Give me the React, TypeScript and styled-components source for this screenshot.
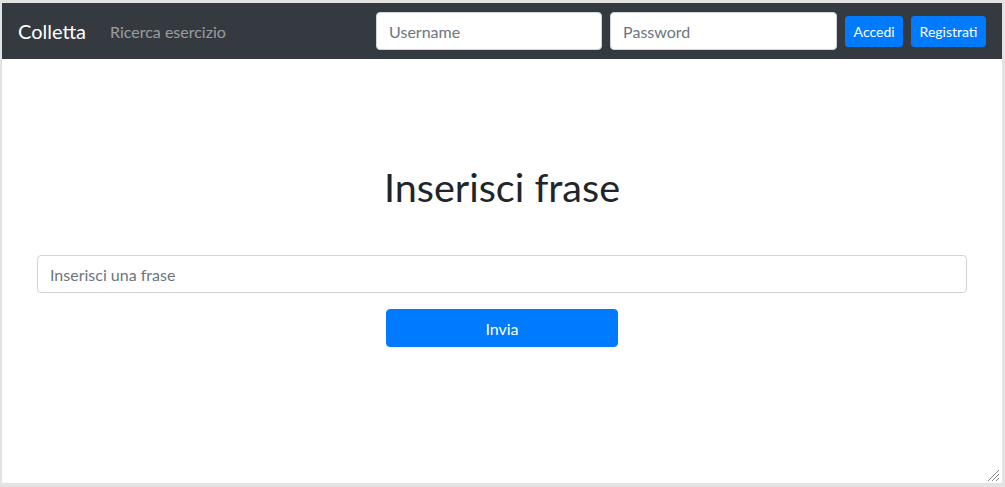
import React from "react";
import styled, { createGlobalStyle } from "styled-components";

const Global = createGlobalStyle`
  html, body { margin: 0; padding: 0; background: #e3e3e3; }
  body { font-family: "Lato", "Liberation Sans", sans-serif; }
  * { box-sizing: border-box; }
`;

const Frame = styled.div`
  width: 1005px;
  height: 487px;
  padding: 3px 3px 4px 2px;
  background: #e3e3e3;
`;

const Page = styled.div`
  position: relative;
  height: 100%;
  background: #ffffff;
  display: flex;
  flex-direction: column;
`;

const Navbar = styled.nav`
  height: 56px;
  background: #343a40;
  display: flex;
  align-items: center;
  padding: 0 16px;
`;

const Brand = styled.a`
  color: #ffffff;
  font-size: 20px;
  margin-right: 24px;
  text-decoration: none;
`;

const NavLink = styled.a`
  color: rgba(255, 255, 255, 0.5);
  font-size: 16px;
  text-decoration: none;
`;

const NavForm = styled.form`
  margin-left: auto;
  display: flex;
  align-items: center;
  gap: 8px;
`;

const Input = styled.input<{ $w?: string }>`
  width: ${(p) => p.$w || "100%"};
  height: 38px;
  padding: 6px 12px;
  font-family: inherit;
  font-size: 16px;
  color: #495057;
  background: #fff;
  border: 1px solid #ced4da;
  border-radius: 4px;
  outline: none;
  &::placeholder { color: #6c757d; }
`;

const SmallButton = styled.button`
  height: 31px;
  padding: 0 7.5px;
  font-family: inherit;
  font-size: 14px;
  color: #fff;
  background: #007bff;
  border: 1px solid #007bff;
  border-radius: 3px;
`;

const Main = styled.main`
  display: flex;
  flex-direction: column;
  align-items: center;
  padding: 104px 35px 0;
`;

const Title = styled.h1`
  margin: 0 0 44px;
  font-size: 39.6px;
  font-weight: 400;
  line-height: 48px;
  color: #212529;
`;

const WideButton = styled.button`
  margin-top: 16px;
  width: 232px;
  height: 38px;
  font-family: inherit;
  font-size: 16px;
  color: #fff;
  background: #007bff;
  border: 1px solid #007bff;
  border-radius: 4px;
`;

const Grip = styled.svg`
  position: absolute;
  right: 2px;
  bottom: 1px;
`;

export default function App() {
  return (
    <>
      <Global />
      <Frame>
        <Page>
          <Navbar>
            <Brand>Colletta</Brand>
            <NavLink>Ricerca esercizio</NavLink>
            <NavForm onSubmit={(e) => e.preventDefault()}>
              <Input $w="226px" placeholder="Username" />
              <Input $w="227px" type="password" placeholder="Password" />
              <SmallButton type="button">Accedi</SmallButton>
              <SmallButton type="button">Registrati</SmallButton>
            </NavForm>
          </Navbar>
          <Main>
            <Title>Inserisci frase</Title>
            <Input placeholder="Inserisci una frase" />
            <WideButton type="button">Invia</WideButton>
          </Main>
          <Grip width="13" height="13" viewBox="0 0 13 13">
            <path d="M12 1 L1 12 M12 5 L5 12 M12 9 L9 12" stroke="#8a8a8a" strokeWidth="1" />
          </Grip>
        </Page>
      </Frame>
    </>
  );
}
